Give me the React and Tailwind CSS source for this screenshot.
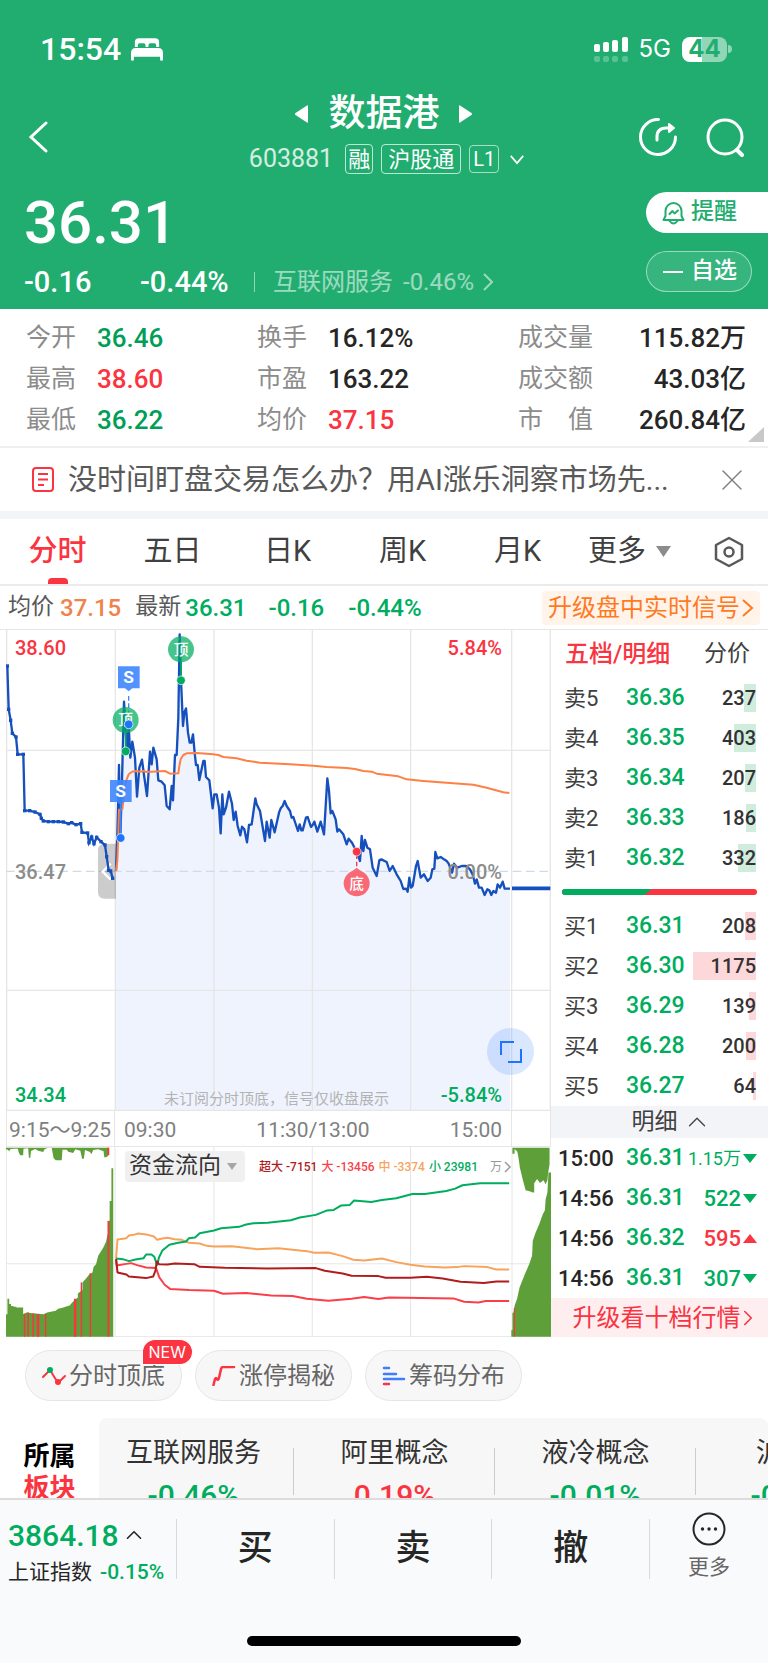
import React from 'react';
import { ChevronRight, ChevronUp, X } from 'lucide-react';

const GREEN = '#00ad5f';
const RED = '#fa3440';

const stats = [
  [
    { label: '今开', value: '36.46', color: 'text-[#009e57]' },
    { label: '最高', value: '38.60', color: 'text-[#fa3440]' },
    { label: '最低', value: '36.22', color: 'text-[#009e57]' },
  ],
  [
    { label: '换手', value: '16.12%', color: 'text-[#262626]' },
    { label: '市盈', value: '163.22', color: 'text-[#262626]' },
    { label: '均价', value: '37.15', color: 'text-[#fa3440]' },
  ],
  [
    { label: '成交量', value: '115.82万', color: 'text-[#262626]' },
    { label: '成交额', value: '43.03亿', color: 'text-[#262626]' },
    { label: '市　值', value: '260.84亿', color: 'text-[#262626]' },
  ],
];

const sells = [
  { label: '卖5', price: '36.36', qty: 237, bar: 12 },
  { label: '卖4', price: '36.35', qty: 403, bar: 22 },
  { label: '卖3', price: '36.34', qty: 207, bar: 11 },
  { label: '卖2', price: '36.33', qty: 186, bar: 10 },
  { label: '卖1', price: '36.32', qty: 332, bar: 18 },
];

const buys = [
  { label: '买1', price: '36.31', qty: 208, bar: 11 },
  { label: '买2', price: '36.30', qty: 1175, bar: 63 },
  { label: '买3', price: '36.29', qty: 139, bar: 7 },
  { label: '买4', price: '36.28', qty: 200, bar: 10 },
  { label: '买5', price: '36.27', qty: 64, bar: 3 },
];

const trades = [
  { time: '15:00', price: '36.31', qty: '1.15万', up: false },
  { time: '14:56', price: '36.31', qty: '522', up: false },
  { time: '14:56', price: '36.32', qty: '595', up: true },
  { time: '14:56', price: '36.31', qty: '307', up: false },
];

const boards = [
  { name: '互联网服务', change: '-0.46%' },
  { name: '阿里概念', change: '0.19%' },
  { name: '液冷概念', change: '-0.01%' },
  { name: '沪股通', change: '-0.08%' },
];

// Call auction, 9:15 - 9:25
const auction =
  '22,135 26,265 32,298 37,337 48,348 53,400 70,400 74,569 89,569 105,573 120,580 124,592 130,600 145,602 160,602 175,602 190,603 205,608 215,605 228,611 242,608 246,634 263,636 267,665 275,648 282,668 290,649 303,662 315,672 320,707 326,748 332,750 338,772';

const morning = [
  [348, 750], [352, 640], [355, 520], [357, 432], [361, 650], [366, 480], [372, 242], [378, 345],
  [382, 390], [386, 310], [391, 410], [397, 362], [405, 410], [411, 527], [418, 440], [426, 416],
  [432, 462], [441, 525], [450, 392], [455, 430], [460, 380], [470, 415], [475, 478], [485, 482],
  [494, 493], [500, 555], [509, 565], [515, 495], [519, 538], [525, 402], [530, 402], [535, 290],
  [539, 40], [543, 178], [549, 315], [553, 275], [558, 262], [564, 335], [569, 365], [574, 365],
  [579, 340], [584, 395], [588, 432], [593, 432], [598, 477], [610, 420], [614, 420], [618, 468],
  [628, 478], [638, 562], [643, 520], [650, 520], [657, 560], [662, 637], [667, 520], [671, 580],
  [678, 560], [687, 512], [696, 548], [701, 597], [707, 572], [713, 615], [721, 643], [726, 617],
  [733, 625], [741, 664], [747, 612], [755, 610], [766, 532], [770, 550], [780, 570], [795, 660],
  [800, 602], [809, 650], [814, 597], [824, 634], [837, 575], [842, 562], [848, 555],
];

const afternoon = [
  [854, 540], [860, 555], [870, 570], [875, 590], [880, 588], [894, 630], [899, 610], [904, 628],
  [908, 628], [918, 590], [923, 588], [933, 618], [938, 612], [943, 602], [952, 632], [962, 602],
  [972, 640], [982, 472], [987, 510], [992, 577], [997, 570], [1007, 595], [1012, 632], [1017, 625],
  [1030, 640], [1040, 670], [1046, 653], [1056, 665], [1070, 692], [1080, 720], [1085, 645], [1090, 690],
  [1095, 657], [1102, 680], [1110, 685], [1118, 740], [1130, 765], [1138, 718], [1144, 715], [1160, 723],
  [1169, 750], [1178, 735], [1190, 760], [1202, 780], [1210, 804], [1218, 803], [1223, 812], [1228, 770],
  [1233, 800], [1238, 795], [1248, 735], [1253, 720], [1262, 770], [1272, 760], [1283, 780], [1292, 770],
  [1297, 745], [1303, 743], [1306, 693], [1312, 712], [1322, 708], [1332, 715], [1340, 720], [1346, 728],
  [1356, 755], [1362, 728], [1372, 740], [1385, 735], [1398, 735], [1410, 745], [1418, 760], [1425, 788],
  [1430, 775], [1437, 800], [1445, 800], [1454, 822], [1462, 805], [1468, 808], [1474, 822], [1480, 810],
  [1488, 815], [1493, 790], [1500, 800], [1508, 782], [1514, 803], [1530, 803],
];

const priceLine = [...morning, ...afternoon].map((p) => p.join(',')).join(' ');

const averageLine =
  '348,750 352,720 355,640 357,566 367,565 370,540 375,495 380,475 386,460 396,452 410,450 420,452 430,450 440,453 495,450 510,458 535,457 538,435 542,415 550,402 560,397 590,396 640,400 655,402 670,408 710,412 740,419 780,425 870,430 940,434 980,438 1040,441 1065,444 1090,450 1115,452 1130,458 1195,466 1220,475 1270,480 1320,484 1420,491 1460,500 1510,514 1528,516';

const flows = [
  {
    color: '#f7a35c',
    points:
      '326,383 330,326 355,322 362,314 375,312 388,308 415,312 432,317 441,327 455,323 470,321 490,325 510,327 530,336 560,338 580,345 600,347 650,346 720,355 780,352 860,361 880,366 920,365 960,376 990,387 1020,389 1070,383 1110,394 1150,402 1190,407 1245,410 1280,409 1300,406 1365,409 1390,416 1426,416',
  },
  {
    color: GREEN,
    points:
      '326,383 345,385 362,391 380,386 403,382 410,371 425,371 433,378 441,403 446,380 455,360 475,342 500,336 522,332 530,322 547,320 560,307 600,299 620,292 670,288 690,281 710,277 750,276 815,268 840,260 885,252 915,239 935,237 955,224 980,222 992,209 1040,213 1070,207 1110,202 1155,189 1190,189 1250,180 1275,173 1295,163 1345,157 1426,157',
  },
  {
    color: '#fa3f4a',
    points:
      '326,385 328,404 350,400 368,397 385,403 410,410 438,412 447,440 462,462 478,475 530,478 600,480 625,489 690,487 760,494 820,496 860,504 920,510 985,504 1020,499 1060,505 1090,500 1270,503 1300,513 1340,515 1360,511 1426,511',
  },
  {
    color: '#b01c1c',
    points:
      '326,385 330,425 355,431 362,437 410,442 430,437 436,420 440,392 446,400 470,401 490,398 545,400 560,408 630,411 750,413 885,412 910,420 960,428 985,435 1060,436 1080,441 1150,441 1195,438 1240,443 1290,453 1355,457 1390,452 1426,452',
  },
];

// [x, top, width] of the falling ticks in the auction volume
const redTicks = [
  [68, 550, 4], [78, 545, 4], [92, 548, 4], [104, 550, 7], [127, 550, 4], [208, 504, 7],
  [227, 455, 4], [252, 428, 4], [302, 270, 5],
];

const tabs = ['五日', '日K', '周K', '月K'];

const StatusBar = () => (
  <div className="flex h-[94px] items-center justify-between pl-10 pr-9 pt-1">
    <div className="flex items-center gap-2.5">
      <span className="text-[32px] font-medium leading-8">15:54</span>
      <svg width="32" height="23" viewBox="0 0 33 23" fill="currentColor">
        <path d="M4 9V4q0-4 4-4h17q4 0 4 4v5h-3V7q0-2-2-2h-4q-2 0-2 2v2h-3V7q0-2-2-2H9Q7 5 7 7v2z" />
        <path d="M0 15q0-5 5-5h23q5 0 5 5v7q0 1-1.500 1T30 22v-3H3v3q0 1-1.500 1T0 22z" />
      </svg>
    </div>
    <div className="flex items-center gap-[11px]">
      <svg width="34" height="25" viewBox="0 0 34 25" fill="currentColor">
        <rect x="0" y="7" width="6" height="8" rx="2" />
        <rect x="9" y="5" width="6" height="10" rx="2" />
        <rect x="18" y="3" width="6" height="12" rx="2" />
        <rect x="28" y="0" width="6" height="15" rx="2" />
        <g opacity=".25">
          <rect x="0" y="19" width="6" height="6" rx="2" />
          <rect x="9" y="19" width="6" height="6" rx="2" />
          <rect x="18" y="19" width="6" height="6" rx="2" />
          <rect x="28" y="19" width="6" height="6" rx="2" />
        </g>
      </svg>
      <span className="font-['Inter',sans-serif] text-[24px] leading-8">5G</span>
      <div className="flex items-center gap-px">
        <div className="flex h-[25px] w-[45px] items-center justify-center rounded-lg bg-linear-to-r from-white from-44% to-[#90d6b7] to-44% font-['Inter',sans-serif] text-[24px] font-bold leading-6 text-[#21ad70]">
          44
        </div>
        <div className="h-2 w-1 rounded-r-full bg-[#90d6b7]" />
      </div>
    </div>
  </div>
);

const Header = () => (
  <header className="bg-[#21ad70] text-white">
    <StatusBar />
    <div className="grid grid-cols-[1fr_auto_1fr] items-center">
      <button aria-label="返回" className="justify-self-start pl-7 pt-1.5">
        <svg width="20" height="32" viewBox="0 0 20 32" fill="none" stroke="currentColor" strokeWidth="3" strokeLinecap="round">
          <path d="M18 2 3 16l15 14" />
        </svg>
      </button>
      <div className="flex flex-col items-center gap-2.5">
        <div className="flex h-10 items-center gap-5">
          <button aria-label="上一个">
            <svg width="13" height="18" viewBox="0 0 13 18" fill="currentColor"><path d="M13 1v16q0 1-1 .5L.5 10q-1-1 0-2L12 .5q1-.5 1 .5" /></svg>
          </button>
          <h1 className="text-[37px] font-medium leading-10">数据港</h1>
          <button aria-label="下一个">
            <svg width="13" height="18" viewBox="0 0 13 18" fill="currentColor"><path d="M0 1v16q0 1 1 .5L12.500 10q1-1 0-2L1 .5Q0 0 0 1" /></svg>
          </button>
        </div>
        <div className="flex h-[30px] items-center gap-2 pl-1.5">
          <span className="pr-1 text-[25px] leading-[30px] text-white/80">603881</span>
          <span className="flex h-[30px] w-7 items-center justify-center rounded border border-white/70 text-[22px]">融</span>
          <span className="flex h-[30px] items-center rounded border border-white/70 px-1.5 text-[22px]">沪股通</span>
          <span className="flex h-[28px] w-[30px] items-center justify-center rounded border border-white/60 text-[20px]">L1</span>
          <svg className="ml-0.5" width="16" height="11" viewBox="0 0 18 12" fill="none" stroke="currentColor" strokeWidth="2">
            <path d="m2 2 7 8 7-8" />
          </svg>
        </div>
      </div>
      <div className="flex gap-7 justify-self-end pr-6 pt-1.5">
        <button aria-label="分享">
          <svg width="40" height="40" viewBox="0 0 40 40" fill="none" stroke="currentColor" strokeWidth="3" strokeLinecap="round" strokeLinejoin="round">
            <path d="M20.500 2.500A17.500 17.500 0 1 0 37.500 20" />
            <path d="M19 23v-3q0-9 9-9h4" />
            <path d="m31 7 5 4-5 4z" fill="currentColor" strokeWidth="2" />
          </svg>
        </button>
        <button aria-label="搜索">
          <svg width="38" height="40" viewBox="0 0 38 40" fill="none" stroke="currentColor" strokeWidth="3" strokeLinecap="round">
            <circle cx="19" cy="20" r="17" />
            <path d="m31 33 5 5" strokeWidth="4" />
          </svg>
        </button>
      </div>
    </div>
    <div className="flex justify-between pb-3 pl-6 pt-[18px]">
      <div className="pt-px">
        <div className="text-[60px] font-medium leading-[60px]">36.31</div>
        <div className="mt-[14px] flex h-[30px] items-center text-[29px] font-medium leading-[30px]">
          <span className="w-[116px]">-0.16</span>
          <span className="w-[114px]">-0.44%</span>
          <span className="h-5 w-px bg-white/50" />
          <a href="#board" className="flex items-center pl-[18px] text-[24px] font-normal text-white/55">
            互联网服务<span className="pl-2.5">-0.46%</span>
            <svg className="ml-2" width="12" height="18" viewBox="0 0 12 18" fill="none" stroke="currentColor" strokeWidth="2"><path d="m2 1 8 8-8 8" /></svg>
          </a>
        </div>
      </div>
      <div className="flex flex-col gap-[18px]">
        <button className="flex h-[41px] w-[122px] items-center gap-1.5 rounded-l-full bg-white pl-4 text-[23px] font-medium text-[#21ad70]">
          <svg width="23" height="24" viewBox="0 0 23 24" fill="none" stroke="currentColor" strokeWidth="2" strokeLinejoin="round" strokeLinecap="round">
            <path d="M1.500 19h20L19.500 15v-5a8 8 0 0 0-16 0v5z" />
            <path d="M7.500 20q4 5 8 0" />
            <path d="m7.500 13 3-3 2 2.500 3.500-3" />
          </svg>
          提醒
        </button>
        <button className="flex h-[41px] w-[106px] items-center gap-2 rounded-full border border-white/50 bg-white/10 pl-4 text-[23px] font-medium">
          <span className="h-0.5 w-5 bg-white" />
          自选
        </button>
      </div>
    </div>
  </header>
);

const Stats = () => (
  <section className="relative grid grid-cols-[231fr_261fr_228fr] border-b-2 border-[#f0f0f0] pb-1.5 pl-[26px] pr-[22px] pt-2">
    {stats.map((column, i) => (
      <dl key={i}>
        {column.map((item) => (
          <div key={item.label} className={`flex h-[41px] items-center ${i === 2 ? 'justify-between' : ''}`}>
            <dt className={`text-[25px] leading-8 text-[#8c8c8c] ${i === 2 ? '' : 'w-[71px]'}`}>{item.label}</dt>
            <dd className={`text-[26px] font-medium leading-8 ${item.color}`}>{item.value}</dd>
          </div>
        ))}
      </dl>
    ))}
    <svg className="absolute bottom-1 right-1" width="16" height="15" viewBox="0 0 16 15" fill="#c8c8c8"><path d="M16 0v15H0z" /></svg>
  </section>
);

const Banner = () => (
  <section className="box-content flex h-[63px] items-center border-b-8 border-[#f2f4f8] pl-8 pr-[18px]">
    <svg width="22" height="25" viewBox="0 0 22 25" fill="none" stroke="#fa3440" strokeWidth="2">
      <rect x="1" y="1" width="20" height="23" rx="3" />
      <path d="M6 7h10M6 12.500h10M6 18h6" />
    </svg>
    <p className="flex-1 pl-3.5 text-[29px] leading-9 text-[#595959]">没时间盯盘交易怎么办？用AI涨乐洞察市场先...</p>
    <button aria-label="关闭">
      <X size={36} strokeWidth={1} color="#808080" />
    </button>
  </section>
);

const PeriodTabs = () => (
  <nav className="grid h-[67px] grid-cols-[115fr_115fr_115fr_115fr_115fr_193fr] border-b-2 border-[#ebebeb] text-[29px] text-[#404040]">
    <button className="relative font-medium text-[#fa3440]">
      分时
      <span className="absolute bottom-0 left-1/2 h-1.5 w-5 -translate-x-1/2 rounded-t bg-[#fa3440]" />
    </button>
    {tabs.map((tab) => (
      <button key={tab}>{tab}</button>
    ))}
    <div className="flex items-center justify-between pl-[13px] pr-6">
      <button className="flex items-center gap-2.5">
        更多
        <svg width="15" height="11" viewBox="0 0 15 11" fill="#8c8c8c"><path d="M0 0h15L7.500 11z" /></svg>
      </button>
      <button aria-label="设置">
        <svg width="30" height="32" viewBox="0 0 30 32" fill="none" stroke="#595959" strokeWidth="2.500" strokeLinejoin="round">
          <path d="m15 2 13 7v14l-13 7-13-7V9z" />
          <circle cx="15" cy="16" r="4.500" />
        </svg>
      </button>
    </div>
  </nav>
);

const QuoteLine = () => (
  <div className="flex h-[44px] items-center border-b border-[#e6e6e6] px-2 text-[24px] font-medium text-[#00ad5f]">
    <span className="pr-1.5 text-[23px] font-normal text-[#595959]">均价</span>
    <span className="pr-3.5 text-[#f0834a]">37.15</span>
    <span className="pr-1 text-[23px] font-normal text-[#595959]">最新</span>
    <span className="pr-[22px]">36.31</span>
    <span className="pr-6">-0.16</span>
    <span>-0.44%</span>
    <a href="#signal" className="ml-auto flex h-[34px] items-center rounded bg-[#fff3ea] px-1.5 text-[24px] font-normal text-[#ff7a1f]">
      升级盘中实时信号
      <svg className="ml-0.5" width="12" height="20" viewBox="0 0 12 20" fill="none" stroke="currentColor" strokeWidth="2"><path d="m1 2 9 8-9 8" /></svg>
    </a>
  </div>
);

const Signal = ({ x, y, text, color }) => (
  <g>
    <circle cx={x} cy={y} r="39" fill={color} fillOpacity=".72" />
    <text x={x} y={y + 16} textAnchor="middle" fontSize="44" fontWeight="500" fill="#fff">{text}</text>
  </g>
);

const SellFlag = ({ x, y }) => (
  <g>
    <path d={`M${x - 32} ${y - 33}h65v66h-22l-11 9-11-9h-21z`} fill="#3f86ff" fillOpacity=".9" />
    <text x={x} y={y + 18} textAnchor="middle" fontSize="52" fontWeight="700" fill="#fff">S</text>
  </g>
);

const Dot = ({ x, y, color }) => <circle cx={x} cy={y} r="13" fill={color} stroke="#fff" strokeWidth="2" />;

const PriceChart = () => (
  <div className="relative">
    <svg className="block h-[481px] w-full" viewBox="18 27 1635 1443" preserveAspectRatio="none">
      <polygon points={`348,1470 ${priceLine} 1530,1470`} fill="#eff3fe" />
      <g stroke="#e6e6e6" strokeWidth="4">
        <path d="M20 27V1470M346 27V1470M642 27V1470M937 27V1470M1232 27V1470M1535 27V1470M1651 27V1470" />
        <path d="M18 388H1653M18 1108H1653M18 1468H1653" />
      </g>
      <path d="M18 751H1653" stroke="#cfdbe6" strokeWidth="4" strokeDasharray="26 14" />
      <path d="M348 668v165h-34q-20 0-20-20V688q0-20 20-20z" fill="#000" fillOpacity=".2" />
      <path d="m332 728-24 24 24 24" fill="none" stroke="#fff" strokeWidth="7" />
      <polyline points={auction} fill="none" stroke="#1650bd" strokeWidth="7" />
      {auction.split(' ').map((p) => {
        const [x, y] = p.split(',').map(Number);
        return <rect key={p} x={x - 5} y={y - 5} width="10" height="10" fill="#1650bd" />;
      })}
      <polyline points={priceLine} fill="none" stroke="#1650bd" strokeWidth="7" strokeLinejoin="round" />
      <path d="M1536 802H1651" stroke="#1650bd" strokeWidth="11" />
      <polyline points={averageLine} fill="none" stroke="#ff8044" strokeWidth="6" strokeLinejoin="round" />

      <path d="M377 330V391M543 120V178" stroke={GREEN} strokeWidth="5" />
      <path d="M386 225V300" stroke="#3f86ff" strokeWidth="4" strokeDasharray="14 8" />
      <path d="M1070 700V750" stroke={RED} strokeWidth="4" strokeDasharray="14 8" />
      <path d="M362 545V650" stroke="#3f86ff" strokeWidth="5" />
      <Signal x={543} y={85} text="顶" color={GREEN} />
      <Signal x={377} y={297} text="顶" color={GREEN} />
      <Signal x={1070} y={787} text="底" color={RED} />
      <path d="m1054 752 16-12 16 12z" fill="#f56f7b" />
      <SellFlag x={386} y={169} />
      <SellFlag x={362} y={510} />
      <Dot x={543} y={178} color={GREEN} />
      <Dot x={377} y={391} color={GREEN} />
      <Dot x={386} y={310} color="#1f74ff" />
      <Dot x={362} y={651} color="#1f74ff" />
      <Dot x={1070} y={692} color={RED} />
    </svg>
    <div className="pointer-events-none absolute inset-y-0 left-0 right-[49px] flex flex-col justify-between pl-[9px] text-[20px] font-medium leading-6">
      <div className="flex justify-between pt-1.5 text-[#fa3440]"><span>38.60</span><span>5.84%</span></div>
      <div className="flex justify-between text-[#8c8c8c]"><span>36.47</span><span>0.00%</span></div>
      <div className="flex pb-1 text-[#00ad5f]">
        <span>34.34</span>
        <span className="ml-[98px] self-end text-[15px] font-normal leading-4 text-[#b3b3b3]">未订阅分时顶底，信号仅收盘展示</span>
        <span className="ml-auto">-5.84%</span>
      </div>
    </div>
    <button aria-label="全屏" className="absolute bottom-9 right-[17px] flex size-[47px] items-center justify-center rounded-full bg-[#3f86ff]/20">
      <svg width="22" height="22" viewBox="0 0 22 22" fill="none" stroke="#1f74ff" strokeWidth="2"><path d="M1 14V1h13M21 8v13H8" /></svg>
    </button>
  </div>
);

const TimeAxis = () => (
  <div className="grid h-9 grid-cols-[109fr_397fr_39fr] items-center border-b border-[#e6e6e6] text-[21px] text-[#808080]">
    <span className="flex h-full items-center whitespace-nowrap border-x border-[#e6e6e6] pl-0.5 pt-1">9:15～9:25</span>
    <div className="flex h-full items-center justify-between border-r border-[#e6e6e6] px-[9px] pt-1">
      <span>09:30</span>
      <span>11:30/13:00</span>
      <span>15:00</span>
    </div>
    <span className="h-full border-r border-[#e6e6e6]" />
  </div>
);

const FlowChart = () => (
  <div className="relative">
    <svg className="block h-[190px] w-full" viewBox="18 48 1525 571" preserveAspectRatio="none">
      <path
        d="M19 48V618M323 48V618M600 48V618M875 48V618M1150 48V618M1434 48V618M18 399H1543M18 618H1543"
        fill="none" stroke="#e6e6e6" strokeWidth="1" vectorEffect="non-scaling-stroke"
      />
      <g fill="#5f9f3a">
        <path d="M18 618V551h4V504h5v16h5v6h7v2h8v2h19v20l10-5 17 3 30 3 10-6 24-5 7-6 12-3 20-7 10-12 13-12v-12l13-10v-23l10-12 10-13 8-5 3-16 7-9 6-25 14-24 8-18 4-22h4V270h2V210h5V112h5V618z" />
        <path d="M18 50v5l5 1 4 5 3-6 9-2h12l3 12 4 8h8l1-20 13-1 2 28h4l2-20 12-6 8 5 14 4 4-8 8-4h12l5 30 6 7h17l2-32h12l4 6 14 4 6-11 14 4 5 24h5l3-26 14 6 4 7 5-13 14-2 15 6 2 18h6l6-6V50z" />
        <path d="M1432 618v-20h3v-52h3l3-21 7-20 7-35 15-40 12-30 8-25 2-45 8-25 10-25 10-30 6-12 2-33 5-20 3-60h7V618z" />
        <path d="M1435 50v18h6V54l8 8 3 18 4 30 9 40 7 28 13 4 7 3h4v-28l8-13 8 12 10-8 6 12 5-12 2-22 4-26V50z" />
      </g>
      <g fill={RED}>
        {redTicks.map(([x, y, w]) => (
          <rect key={x} x={x} y={y} width={w} height={618 - y} />
        ))}
        <rect x="302" y="50" width="5" height="22" />
        <rect x="1439" y="532" width="3" height="86" />
      </g>
      {flows.map((flow) => (
        <polyline
          key={flow.color} points={flow.points} fill="none" stroke={flow.color}
          strokeWidth="2" strokeLinejoin="round" vectorEffect="non-scaling-stroke"
        />
      ))}
    </svg>
    <div className="absolute left-[119px] right-[39px] top-1 flex h-[31px] items-center justify-between">
      <button className="flex h-full items-center gap-1.5 rounded bg-[#f0f0f0] px-1 pr-2 text-[23px] text-[#333]">
        资金流向
        <svg width="10" height="7" viewBox="0 0 10 7" fill="#a6a6a6"><path d="M0 0h10L5 7z" /></svg>
      </button>
      <div className="flex items-center gap-1 whitespace-nowrap text-[12px] font-medium">
        <span className="text-[#b01c1c]">超大 -7151</span>
        <span className="text-[#fa3f4a]">大 -13456</span>
        <span className="text-[#f7a35c]">中 -3374</span>
        <span className="pr-2 text-[#00ad5f]">小 23981</span>
        <span className="flex items-center gap-0.5 font-normal text-[#999]">
          万
          <svg width="8" height="12" viewBox="0 0 8 12" fill="none" stroke="currentColor" strokeWidth="1.500"><path d="m1 1 5 5-5 5" /></svg>
        </span>
      </div>
    </div>
  </div>
);

const OrderRow = ({ row, tint }) => (
  <li className="flex h-10 items-center pl-[13px] pr-3">
    <span className="w-[62px] text-[22px] text-[#404040]">{row.label}</span>
    <span className="text-[23px] font-medium text-[#00ad5f]">{row.price}</span>
    <span className="relative ml-auto flex h-7 items-center text-[20px] font-medium text-[#333]">
      <span className={`absolute right-0 h-7 ${tint}`} style={{ width: row.bar }} />
      <span className="relative">{row.qty}</span>
    </span>
  </li>
);

const OrderBook = () => (
  <aside className="w-[217px]">
    <div className="flex h-[48px] items-center justify-between pl-3.5 pr-[18px] text-[24px]">
      <button className="font-medium text-[#fa3440]">五档/明细</button>
      <button className="text-[23px] text-[#404040]">分价</button>
    </div>
    <ul>
      {sells.map((row) => <OrderRow key={row.label} row={row} tint="bg-[#d0ecdd]" />)}
    </ul>
    <div className="flex h-7 items-center px-[11px]">
      <svg className="h-1.5 w-full rounded-full" viewBox="0 0 195 6" preserveAspectRatio="none">
        <path d="M0 0H195V6H0z" fill={RED} />
        <path d="M0 0H90L82 6H0z" fill={GREEN} />
      </svg>
    </div>
    <ul>
      {buys.map((row) => <OrderRow key={row.label} row={row} tint="bg-[#fdd8da]" />)}
    </ul>
    <button className="flex h-8 w-full items-center justify-center gap-1 bg-[#f2f4f8] pl-6 text-[23px] text-[#404040]">
      明细
      <ChevronUp size={30} strokeWidth={1} />
    </button>
    <ul>
      {trades.map((trade, i) => (
        <li key={i} className="flex h-10 items-center pl-[7px] pr-[11px] text-[22px] font-medium">
          <span className="w-[68px] text-[#262626]">{trade.time}</span>
          <span className="text-[23px] text-[#00ad5f]">{trade.price}</span>
          <span className={`ml-auto flex items-center gap-0.5 ${trade.up ? 'text-[#fa3440]' : 'text-[#00ad5f]'}`}>
            <span className={trade.qty.endsWith('万') ? 'text-[18px] font-normal' : ''}>{trade.qty}</span>
            <svg width="14" height="9" viewBox="0 0 14 9" fill="currentColor">
              <path d={trade.up ? 'M0 9h14L7 0z' : 'M0 0h14L7 9z'} />
            </svg>
          </span>
        </li>
      ))}
    </ul>
    <a href="#level2" className="flex h-[39px] items-center justify-center bg-[#ffeef0] pl-2 text-[24px] text-[#fa3440]">
      升级看十档行情
      <ChevronRight className="-mx-1.5" size={26} strokeWidth={1.5} />
    </a>
  </aside>
);

const Pill = ({ children, text, badge }) => (
  <button className="relative flex h-[51px] w-[157px] items-center justify-center gap-[3px] rounded-full border border-[#e6e6e6] bg-[#f7f7f7] text-[24px] text-[#666]">
    {children}
    {text}
    {badge && (
      <span className="absolute -right-3 -top-3 flex h-[26px] items-center rounded-full rounded-bl-sm border border-white bg-[#fa3440] px-1.5 font-['Inter',sans-serif] text-[16px] text-white">
        {badge}
      </span>
    )}
  </button>
);

const Tools = () => (
  <div className="flex gap-[13px] pl-[25px] pt-[13px]">
    <Pill text="分时顶底" badge="NEW">
      <svg width="24" height="20" viewBox="0 0 24 20" fill="none" stroke="#fa3440" strokeWidth="2" strokeLinecap="round">
        <path d="m1 11 7-7 8 13 7-7" />
        <circle cx="8" cy="4" r="3" fill={GREEN} stroke="none" />
        <circle cx="16" cy="16" r="3" fill={RED} stroke="none" />
      </svg>
    </Pill>
    <Pill text="涨停揭秘">
      <svg width="24" height="20" viewBox="0 0 24 20" fill="none" stroke="#fa3440" strokeWidth="2.500" strokeLinecap="round" strokeLinejoin="round">
        <path d="M1.500 19 3 13q1-2 2 0t2-1l2-9q.500-2 2-2h11" />
      </svg>
    </Pill>
    <Pill text="筹码分布">
      <svg width="24" height="20" viewBox="0 0 24 20" fill="none" strokeWidth="2.500" strokeLinecap="round">
        <path d="M2 2h5M2 8h12M2 13h20" stroke="#3f7dff" />
        <path d="M2 18h5" stroke={RED} />
      </svg>
    </Pill>
  </div>
);

const Boards = () => (
  <section id="board" className="flex pt-[17px]">
    <div className="flex w-[99px] shrink-0 flex-col items-center pt-[22px] text-[26px] font-bold leading-8">
      <span className="text-black">所属</span>
      <span className="text-[#fa3440]">板块</span>
    </div>
    <div className="flex min-w-0 flex-1 overflow-hidden rounded-t-lg bg-[#f7f7f7] pt-4">
      {boards.map((board) => (
        <div key={board.name} className="relative w-[201px] shrink-0 text-center first:w-[195px] first:pr-1.5">
          <div className="text-[27px] leading-[38px] text-[#333]">{board.name}</div>
          <div className={`pt-2 text-[30px] font-medium leading-8 ${board.change.startsWith('-') ? 'text-[#00ad5f]' : 'text-[#fa3440]'}`}>
            {board.change}
          </div>
          <span className="absolute right-0 top-3.5 h-[47px] w-px bg-[#ccc]" />
        </div>
      ))}
    </div>
  </section>
);

const BottomBar = () => (
  <footer className="shrink-0 border-t-2 border-[#dcdcdc] bg-[#f9fafc]">
    <div className="flex h-[98px] items-center">
      <button className="flex w-[176px] flex-col gap-0.5 pl-2 pt-2.5 text-[#00ad5f]">
        <span className="flex h-9 items-center gap-0.5 text-[30px] font-medium">
          3864.18
          <ChevronUp size={26} strokeWidth={1.5} color="#262626" />
        </span>
        <span className="flex h-9 items-center gap-2 whitespace-nowrap text-[21px]">
          <span className="text-[#262626]">上证指数</span>
          <span className="font-medium">-0.15%</span>
        </span>
      </button>
      {['买', '卖', '撤'].map((action) => (
        <button key={action} className="h-[60px] flex-1 border-l border-[#d9d9d9] text-[35px] font-medium text-[#262626]">
          {action}
        </button>
      ))}
      <button className="flex h-[60px] w-[119px] flex-col items-center justify-center gap-[7px] border-l border-[#d9d9d9] pb-[5px] text-[21px] leading-7 text-[#666]">
        <svg className="shrink-0" width="34" height="34" viewBox="0 0 34 34" fill="none" stroke="#262626" strokeWidth="2">
          <circle cx="17" cy="17" r="15.500" />
          <g fill="#262626" stroke="none">
            <circle cx="10.500" cy="17" r="1.700" />
            <circle cx="17" cy="17" r="1.700" />
            <circle cx="23.500" cy="17" r="1.700" />
          </g>
        </svg>
        更多
      </button>
    </div>
    <div className="flex h-[65px] items-end justify-center pb-[17px]">
      <div className="h-2.5 w-[274px] rounded-full bg-black" />
    </div>
  </footer>
);

const App = () => (
  <div className="flex h-screen flex-col bg-white font-['Roboto','Noto_Sans_CJK_SC',sans-serif]">
    <main className="min-h-0 flex-1 overflow-hidden">
      <Header />
      <Stats />
      <Banner />
      <PeriodTabs />
      <QuoteLine />
      <div className="flex">
        <div className="min-w-0 flex-1 pl-1.5">
          <PriceChart />
          <TimeAxis />
          <FlowChart />
        </div>
        <OrderBook />
      </div>
      <Tools />
      <Boards />
    </main>
    <BottomBar />
  </div>
);

export default App;
